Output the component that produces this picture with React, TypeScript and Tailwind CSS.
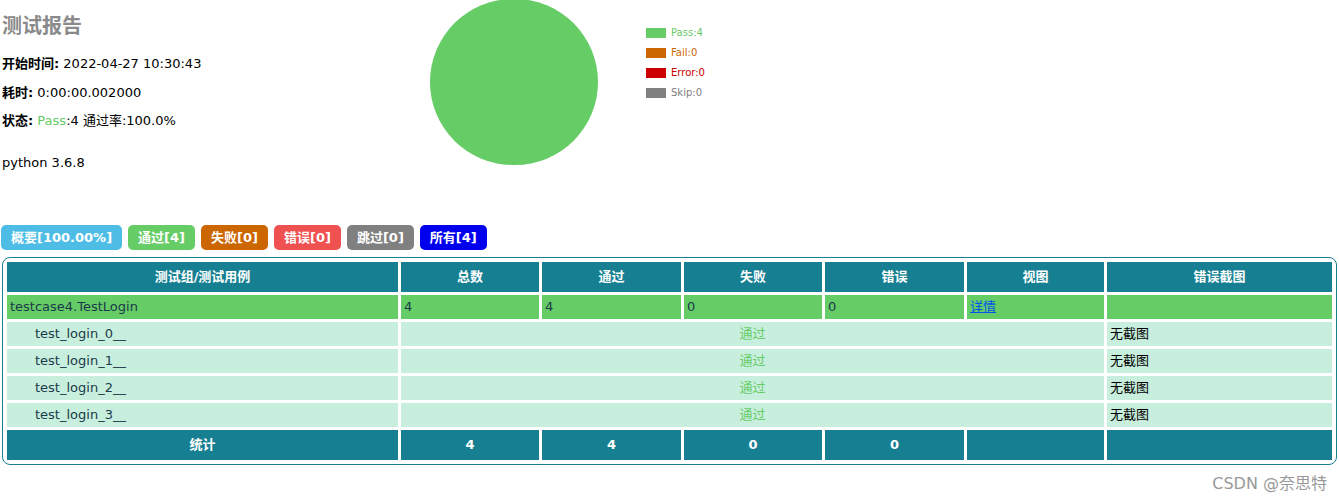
import React from 'react';

const font = { fontFamily: '"DejaVu Sans", "Noto Sans CJK SC", sans-serif' };

const Btn = ({ c, children }: { c: string; children: React.ReactNode }) => (
  <span className={`${c} text-white font-bold text-[13px] px-[10px] h-[25px] leading-[25px] rounded-[5px] inline-block`}>{children}</span>
);

export default function App() {
  const cases = ['test_login_0__', 'test_login_1__', 'test_login_2__', 'test_login_3__'];
  const th = 'bg-[#177f92] text-white font-bold text-[13px] h-[30px] text-center';
  const td = 'h-[24px] text-[13px] text-[#1a3a4a] px-[3px]';
  return (
    <div className="relative w-[1339px] h-[504px] bg-white text-black" style={font}>
      <div className="flex">
        <div className="w-[430px] pl-[2px] pt-[12px]">
          <h1 className="text-[20px] font-bold text-[#8a8a8a] leading-[28px]">测试报告</h1>
          <p className="text-[13px] mt-[14px]"><b>开始时间:</b> 2022-04-27 10:30:43</p>
          <p className="text-[13px] mt-[9px]"><b>耗时:</b> 0:00:00.002000</p>
          <p className="text-[13px] mt-[9px]"><b>状态:</b> <span className="text-[#66cc66]">Pass</span>:4 通过率:100.0%</p>
          <p className="text-[13px] mt-[22px]">python 3.6.8</p>
        </div>
        <div className="w-[168px] h-[166px] rounded-full bg-[#66cc66] mt-0 -translate-y-[1px]" />
        <div className="ml-[48px] mt-[27px] flex flex-col gap-[9px] text-[10px]">
          {[['#66cc66', 'Pass:4'], ['#cc6600', 'Fail:0'], ['#cc0000', 'Error:0'], ['#808080', 'Skip:0']].map(([c, t]) => (
            <div key={t} className="flex items-center gap-[5px] h-[11px]">
              <span className="w-[20px] h-[10px]" style={{ background: c }} />
              <span style={{ color: c }}>{t}</span>
            </div>
          ))}
        </div>
      </div>
      <div className="flex gap-[6px] mt-[53px] pl-[1px]">
        <Btn c="bg-[#4dbde6]">概要[100.00%]</Btn>
        <Btn c="bg-[#66cc66]">通过[4]</Btn>
        <Btn c="bg-[#cc6600]">失败[0]</Btn>
        <Btn c="bg-[#ef5050]">错误[0]</Btn>
        <Btn c="bg-[#808080]">跳过[0]</Btn>
        <Btn c="bg-[#0000ee]">所有[4]</Btn>
      </div>
      <div className="mx-[2px] mt-[7px] border border-[#177f92] rounded-[8px] px-[1px] py-[1px]">
        <table className="w-full border-separate border-spacing-[3px]">
          <colgroup>
            <col className="w-[391px]" /><col className="w-[138px]" /><col className="w-[139px]" /><col className="w-[138px]" /><col className="w-[139px]" /><col className="w-[137px]" /><col />
          </colgroup>
          <thead>
            <tr>{['测试组/测试用例', '总数', '通过', '失败', '错误', '视图', '错误截图'].map(h => <th key={h} className={th}>{h}</th>)}</tr>
          </thead>
          <tbody>
            <tr className="bg-[#66cc66]">
              <td className={td}>testcase4.TestLogin</td>
              <td className={td}>4</td><td className={td}>4</td><td className={td}>0</td><td className={td}>0</td>
              <td className={td}><span className="text-[#0055ee] underline">详情</span></td>
              <td className={td}></td>
            </tr>
            {cases.map(c => (
              <tr key={c} className="bg-[#c8efdd]">
                <td className={`${td} pl-[28px]`}>{c}</td>
                <td colSpan={5} className={`${td} text-center text-[#66cc66]`}>通过</td>
                <td className={`${td} text-black`}>无截图</td>
              </tr>
            ))}
            <tr>
              <td className={th}>统计</td>
              <td className={th}>4</td><td className={th}>4</td><td className={th}>0</td><td className={th}>0</td>
              <td className={th}></td><td className={th}></td>
            </tr>
          </tbody>
        </table>
      </div>
      <div className="absolute right-[12px] bottom-[8px] text-[16px] text-[#999]">CSDN @奈思特</div>
    </div>
  );
}
